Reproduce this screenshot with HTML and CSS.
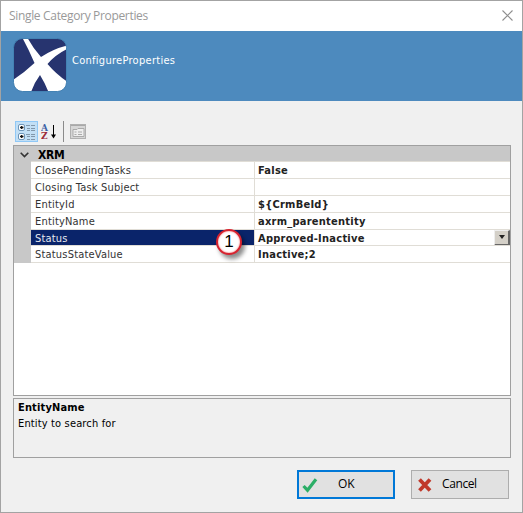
FILE: index.html
```html
<!DOCTYPE html>
<html lang="en">
<head>
<meta charset="utf-8">
<title>Single Category Properties</title>
<link rel="stylesheet" href="styles.css">
</head>
<body>
<div class="window">
  <header class="titlebar">
    <span class="title">Single Category Properties</span>
    <svg class="close" width="11" height="11" viewBox="0 0 11 11"><path d="M.5.5l10 10M10.500.5l-10 10" stroke="#8e8e8e" stroke-width="1.1" fill="none"/></svg>
  </header>
  <div class="banner">
    <svg class="logo" width="54" height="54" viewBox="0 0 54 54">
      <defs><clipPath id="tile"><rect x=".5" y=".5" width="53" height="53" rx="9"/></clipPath></defs>
      <g clip-path="url(#tile)">
        <rect width="54" height="54" fill="#27346f"/>
        <path d="M9.500 0H14.500Q20 10 28 19Q40 11 54 7.500V11Q42 17 34.500 26Q43 36 54 43.500V54H35.500Q32 45 27 37Q21 45 18 54H0V42Q12 34 21.500 25Q16 12 9.500 0Z" fill="#fff"/>
      </g>
      <rect x=".5" y=".5" width="53" height="53" rx="9" fill="none" stroke="#4382b4" stroke-width="1"/>
    </svg>
    <span class="heading">ConfigureProperties</span>
  </div>
  <div class="toolbar">
    <span class="tool tool-active">
      <svg width="21" height="19" viewBox="0 0 21 19">
        <rect x="2.500" y="2.500" width="6" height="6" rx="1.500" fill="#fff" stroke="#6d95b8"/>
        <rect x="2.500" y="11.500" width="6" height="6" rx="1.500" fill="#fff" stroke="#6d95b8"/>
        <path d="M4 5.500h3.500M5.700 4v3M4 14.500h3.500M5.700 13v3" stroke="#111" stroke-width="1.300" fill="none"/>
        <path d="M10 3.500h4M15 3.500h4M11 6.500h3M15 6.500h4M11 8.500h3M15 8.500h4M10 12.500h4M15 12.500h4M11 14.500h3M15 14.500h4M11 17.500h3M15 17.500h4" stroke="#8197ab" fill="none"/>
      </svg>
    </span>
    <svg class="tool-sort" width="17" height="19" viewBox="0 0 17 19">
      <text class="glyph" x="0" y="8.500" fill="#3c61a5">A</text>
      <text class="glyph" x="0" y="17" fill="#9d2b38">Z</text>
      <path d="M12.500 3v12" stroke="#000" fill="none"/><path d="M10 12.500h5l-2.500 4z"/>
    </svg>
    <span class="tool-divider"></span>
    <svg width="17" height="16" viewBox="0 0 17 16">
      <rect x=".5" y=".5" width="15" height="14" fill="#d6d6d6" stroke="#b0b0b0"/>
      <path d="M1 1.500h14" stroke="#a8a8a8"/><path d="M3 5.500h4l1-1h6v8H3z" fill="#eee" stroke="#aaa"/>
      <path d="M4.500 8h2M8 8h4M4.500 10.500h2M8 10.500h4" stroke="#aaa"/>
    </svg>
  </div>
  <main class="grid">
    <div class="category">
      <svg class="chevron" width="9" height="6" viewBox="0 0 9 6"><path d="M.7.8l3.800 3.800L8.300.8" stroke="#333" stroke-width="1.600" fill="none"/></svg>
      <span>XRM</span>
    </div>
    <div class="rows">
      <div class="row"><span class="name">ClosePendingTasks</span><span class="value">False</span></div>
      <div class="row"><span class="name">Closing Task Subject</span><span class="value"></span></div>
      <div class="row"><span class="name">EntityId</span><span class="value">${CrmBeId}</span></div>
      <div class="row"><span class="name">EntityName</span><span class="value">axrm_parententity</span></div>
      <div class="row row-selected"><span class="name">Status</span><span class="value">Approved-Inactive</span>
        <span class="dropdown"><svg width="6" height="4" viewBox="0 0 6 4"><path d="M0 0h6L3 4z" fill="#222"/></svg></span>
        <span class="marker">1</span>
      </div>
      <div class="row"><span class="name">StatusStateValue</span><span class="value">Inactive;2</span></div>
    </div>
  </main>
  <section class="description">
    <strong>EntityName</strong>
    <span>Entity to search for</span>
  </section>
  <footer class="actions">
    <button class="button button-default" type="button">
      <svg width="16" height="16" viewBox="0 0 16 16"><path d="M1.500 9L5.500 13.200L14 2.200" fill="none" stroke="#2bae66" stroke-width="3.200"/></svg>
      <span>OK</span>
    </button>
    <button class="button button-cancel" type="button">
      <svg width="16" height="16" viewBox="0 0 16 16"><path d="M2.500 2.500l10.500 11M13 2.500L2.500 13.500" fill="none" stroke="#c0392b" stroke-width="3.800"/></svg>
      <span>Cancel</span>
    </button>
  </footer>
</div>
</body>
</html>
```
FILE: styles.css
```css
* { box-sizing: border-box; }
body { margin: 0; font: 11px/17px "DejaVu Sans Condensed", "DejaVu Sans", sans-serif; font-stretch: condensed; color: #000; }
svg { display: block; flex: none; }
.window { width: 523px; height: 513px; border: 1px solid #a3a3a3; background: #f0f0f0; display: flex; flex-direction: column; overflow: hidden; position: relative; }
/* edges of the window behind, showing through the left frame */
.window::before { content: ""; position: absolute; left: -1px; top: 131px; width: 1px; height: 73px; background: linear-gradient(#333 1px, transparent 1px 31px, #222 31px 39px, transparent 39px 72px, #333 72px); }
.titlebar { height: 30px; flex: none; background: #fff; display: flex; align-items: center; justify-content: space-between; padding: 0 9px 2px 8px; }
.title { font: 12px/16px "Open Sans", sans-serif; letter-spacing: -.33px; color: #999; white-space: nowrap; padding-top: 2px; }
.banner { height: 70px; flex: none; background: #4d8abe; display: flex; padding: 7px 12px; }
.heading { margin: 14px 0 0 5px; color: #fff; white-space: nowrap; letter-spacing: .28px; }
.toolbar { height: 44px; flex: none; padding: 17px 0 0 14px; display: flex; align-items: center; }
.tool { width: 23px; height: 21px; border: 1px solid #90c8f6; }
.tool-active { background: #c2dff5; }
.tool-sort { margin-left: 3px; }
.glyph { font: bold 9px "DejaVu Serif", serif; }
.tool-divider { width: 1px; height: 21px; margin: 0 6px 0 5px; background: #8b8b8b; }
.grid { width: 498px; height: 251px; flex: none; margin-left: 12px; border: 1px solid #a0a0a0; background: #fff; }
.category { height: 15px; background: #c8c8c8; display: flex; align-items: center; padding: 3px 0 0 6px; font-weight: bold; font-size: 12px; }
.category span { margin-left: 9px; letter-spacing: -.3px; }
.rows { border-left: 17px solid #c8c8c8; }
.row { height: 16.900px; display: flex; border-top: 1px solid #e0ddd6; position: relative; line-height: 17px; }
.row:last-child { height: 17.500px; border-bottom: 1px solid #e0ddd6; }
.name { width: 224px; padding-left: 4px; border-right: 1px solid #e0ddd6; color: #333; white-space: nowrap; letter-spacing: .19px; }
.value { padding-left: 3px; font-weight: bold; color: #222; white-space: nowrap; letter-spacing: .25px; }
.row-selected .name { background: #0a246a; color: #e6e9f0; }
.dropdown { width: 16px; height: 16px; position: absolute; right: 0; top: 0; background: #d4d0c8; border: 1px solid #eee; border-right: 2px solid #666; border-bottom: 2px solid #666; display: flex; align-items: center; justify-content: center; }
.marker { position: absolute; left: 185px; top: -1px; width: 26px; height: 26px; border: 2px solid #d8232f; border-radius: 50%; background: #fff; box-shadow: 3px 4px 4px rgba(0,0,0,.45), inset 0 0 2px #e66; font: 17px/22px "Liberation Sans", sans-serif; text-align: center; z-index: 1; }
.description { width: 498px; height: 60px; flex: none; margin: 2px 0 0 12px; border: 1px solid #a0a0a0; padding: 1px 4px; display: flex; flex-direction: column; line-height: 16px; letter-spacing: .15px; }
.actions { display: flex; gap: 16px; padding: 12px 0 0 296px; }
.button { width: 98px; height: 29px; padding: 0 0 0 5px; border: 1px solid #adadad; background: #e1e1e1; display: flex; align-items: center; font: 12px/16px "Open Sans", sans-serif; color: #000; }
.button span { margin-top: -2px; }
.button-default { border: 2px solid #0078d7; padding-left: 3px; }
.button-default span { margin-left: 20px; }
.button-cancel span { margin-left: 9px; letter-spacing: -.4px; }
```
